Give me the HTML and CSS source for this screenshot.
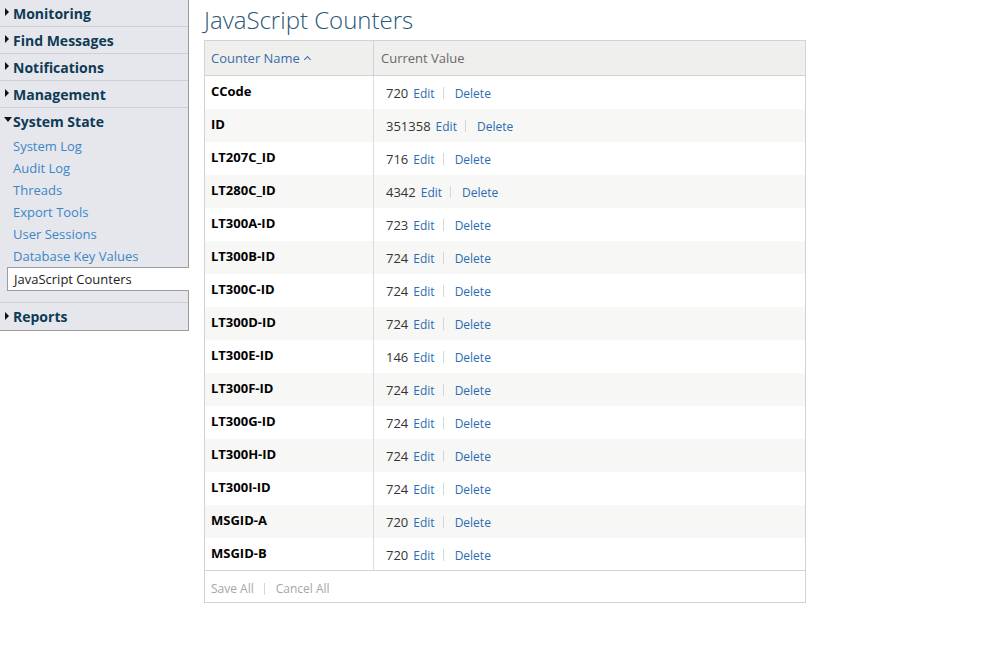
FILE: index.html
```html
<!DOCTYPE html>
<html>
<head>
<meta charset="utf-8">
<link rel="stylesheet" href="styles.css">
</head>
<body>
<div class="page">
  <nav class="nav">
    <div class="nav-head"><span class="tri"></span>Monitoring</div>
    <div class="nav-head"><span class="tri"></span>Find Messages</div>
    <div class="nav-head"><span class="tri"></span>Notifications</div>
    <div class="nav-head"><span class="tri"></span>Management</div>
    <div class="nav-head open"><span class="tri down"></span>System State</div>
    <ul class="nav-links">
      <li><a>System Log</a></li>
      <li><a>Audit Log</a></li>
      <li><a>Threads</a></li>
      <li><a>Export Tools</a></li>
      <li><a>User Sessions</a></li>
      <li><a>Database Key Values</a></li>
    </ul>
    <div class="nav-current">JavaScript Counters</div>
    <div class="nav-head last"><span class="tri"></span>Reports</div>
  </nav>
  <main class="main">
    <h1 class="title">JavaScript Counters</h1>
    <table class="grid">
      <thead>
        <tr>
          <th class="c-name sorted">Counter Name <span class="chev"></span></th>
          <th class="c-val">Current Value</th>
        </tr>
      </thead>
      <tbody>
        <tr><td class="c-name">CCode</td><td class="c-val"><span class="num">720</span><a class="act">Edit</a><span class="sep"></span><a class="act">Delete</a></td></tr>
        <tr><td class="c-name">ID</td><td class="c-val"><span class="num">351358</span><a class="act">Edit</a><span class="sep"></span><a class="act">Delete</a></td></tr>
        <tr><td class="c-name">LT207C_ID</td><td class="c-val"><span class="num">716</span><a class="act">Edit</a><span class="sep"></span><a class="act">Delete</a></td></tr>
        <tr><td class="c-name">LT280C_ID</td><td class="c-val"><span class="num">4342</span><a class="act">Edit</a><span class="sep"></span><a class="act">Delete</a></td></tr>
        <tr><td class="c-name">LT300A-ID</td><td class="c-val"><span class="num">723</span><a class="act">Edit</a><span class="sep"></span><a class="act">Delete</a></td></tr>
        <tr><td class="c-name">LT300B-ID</td><td class="c-val"><span class="num">724</span><a class="act">Edit</a><span class="sep"></span><a class="act">Delete</a></td></tr>
        <tr><td class="c-name">LT300C-ID</td><td class="c-val"><span class="num">724</span><a class="act">Edit</a><span class="sep"></span><a class="act">Delete</a></td></tr>
        <tr><td class="c-name">LT300D-ID</td><td class="c-val"><span class="num">724</span><a class="act">Edit</a><span class="sep"></span><a class="act">Delete</a></td></tr>
        <tr><td class="c-name">LT300E-ID</td><td class="c-val"><span class="num">146</span><a class="act">Edit</a><span class="sep"></span><a class="act">Delete</a></td></tr>
        <tr><td class="c-name">LT300F-ID</td><td class="c-val"><span class="num">724</span><a class="act">Edit</a><span class="sep"></span><a class="act">Delete</a></td></tr>
        <tr><td class="c-name">LT300G-ID</td><td class="c-val"><span class="num">724</span><a class="act">Edit</a><span class="sep"></span><a class="act">Delete</a></td></tr>
        <tr><td class="c-name">LT300H-ID</td><td class="c-val"><span class="num">724</span><a class="act">Edit</a><span class="sep"></span><a class="act">Delete</a></td></tr>
        <tr><td class="c-name">LT300I-ID</td><td class="c-val"><span class="num">724</span><a class="act">Edit</a><span class="sep"></span><a class="act">Delete</a></td></tr>
        <tr><td class="c-name">MSGID-A</td><td class="c-val"><span class="num">720</span><a class="act">Edit</a><span class="sep"></span><a class="act">Delete</a></td></tr>
        <tr><td class="c-name">MSGID-B</td><td class="c-val"><span class="num">720</span><a class="act">Edit</a><span class="sep"></span><a class="act">Delete</a></td></tr>
      </tbody>
    </table>
    <div class="grid-foot"><a class="foot-act">Save All</a><span class="sep"></span><a class="foot-act">Cancel All</a></div>
  </main>
</div>
</body>
</html>
```

FILE: styles.css
```css
html, body {
  margin: 0;
  padding: 0;
  background: #ffffff;
  font-family: "Open Sans", "Liberation Sans", sans-serif;
  color: #222;
}

.page {
  display: flex;
  align-items: flex-start;
}

/* ---------- sidebar ---------- */
.nav {
  width: 188px;
  flex: none;
  background: #e6e7ec;
  border-right: 1px solid #9c9c9f;
  border-bottom: 1px solid #9c9c9f;
}

.nav-head {
  height: 26px;
  border-bottom: 1px solid #cfd0d5;
  display: flex;
  align-items: center;
  padding-left: 5px;
  font-size: 14px;
  font-weight: 700;
  color: #0e3b55;
}

.nav-head.open {
  border-bottom-color: #e6e7ec;
}

.nav-head.last {
  height: 27px;
  border-bottom: none;
  border-top: 1px solid #cfd0d5;
}

.tri {
  width: 0;
  height: 0;
  border-left: 4px solid #111;
  border-top: 4px solid transparent;
  border-bottom: 4px solid transparent;
  margin-right: 4px;
  margin-top: -2px;
}

.tri.down {
  border-left: 4px solid transparent;
  border-right: 4px solid transparent;
  border-top: 5px solid #111;
  border-bottom: none;
  margin-right: 1px;
  margin-left: -1px;
  margin-top: -3px;
}

.nav-links {
  list-style: none;
  margin: 0;
  padding: 0;
}

.nav-links li {
  height: 22px;
  display: flex;
  align-items: center;
  padding-left: 13px;
  font-size: 13px;
}

.nav-links a {
  color: #3b86c7;
}

.nav-current {
  margin-left: 7px;
  margin-right: -1px;
  height: 22px;
  background: #ffffff;
  border: 1px solid #9c9c9f;
  border-right: none;
  display: flex;
  align-items: center;
  padding-left: 6px;
  font-size: 13px;
  color: #222;
  margin-bottom: 11px;
}

/* ---------- main ---------- */
.main {
  margin-left: 15px;
  width: 602px;
}

.title {
  margin: 6px 0 6px 0;
  font-size: 24px;
  font-weight: 300;
  line-height: 28px;
  color: #2a5878;
}

.grid {
  width: 602px;
  border-collapse: collapse;
  border: 1px solid #d3d3d3;
  table-layout: fixed;
}

.grid th {
  height: 34px;
  background: #efefed;
  border-bottom: 1px solid #d3d3d3;
  text-align: left;
  font-size: 13px;
  font-weight: 400;
  padding: 0 6px 0 7px;
}

.grid th.c-name {
  width: 156px;
  padding-left: 6px;
  color: #3a6ca8;
  border-right: 1px solid #d3d3d3;
}

.grid th.c-val {
  color: #6a6a6a;
}

.chev {
  display: inline-block;
  width: 4px;
  height: 4px;
  border-left: 1.5px solid #3a6ca8;
  border-top: 1.5px solid #3a6ca8;
  transform: rotate(45deg);
  margin-left: 2px;
  vertical-align: 1px;
}

.grid tbody tr {
  height: 33px;
}

.grid td {
  padding: 0 6px;
  font-size: 13px;
  line-height: 18px;
  vertical-align: top;
}

.grid td.c-name {
  border-right: 1px solid #dcdcdc;
  font-weight: 700;
  color: #000;
  padding-top: 6px;
}

.grid td.c-val {
  padding-left: 12px;
  padding-top: 8px;
  white-space: nowrap;
}

.grid tbody tr:nth-child(even) td {
  background: #f7f7f5;
}

.num {
  color: #333;
}

.act {
  color: #2a6cb3;
  font-size: 12px;
  margin-left: 5px;
}

.act + .sep + .act {
  margin-left: 0;
}

.sep {
  display: inline-block;
  width: 1px;
  height: 12px;
  background: #d6d6d6;
  margin: 0 11px 0 8px;
  vertical-align: -1px;
}

.grid-foot {
  height: 27px;
  padding-top: 4px;
  border: 1px solid #d3d3d3;
  border-top: none;
  display: flex;
  align-items: center;
  padding-left: 6px;
  font-size: 12px;
}

.foot-act {
  color: #a6a6a6;
}

.grid-foot .sep {
  margin: 0 11px 0 10px;
}
```
